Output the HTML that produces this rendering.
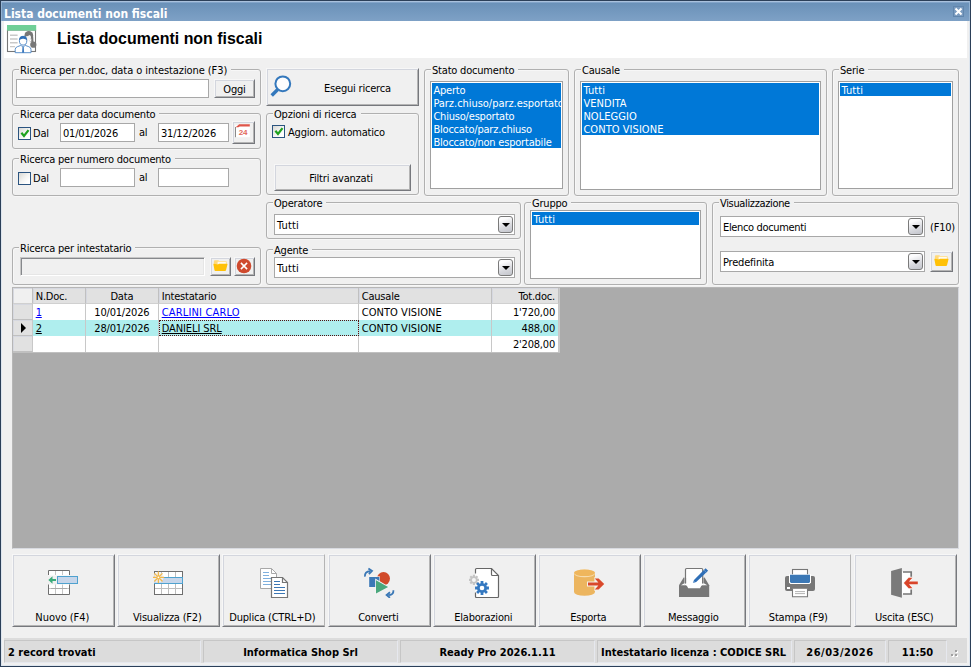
<!DOCTYPE html>
<html lang="it">
<head>
<meta charset="utf-8">
<title>Lista documenti non fiscali</title>
<style>
*{box-sizing:border-box;margin:0;padding:0}
html,body{width:971px;height:667px;overflow:hidden;background:#f0f0f0}
body{font-family:"DejaVu Sans Condensed","Liberation Sans",sans-serif;font-size:11px;color:#000;letter-spacing:-0.2px;position:relative;line-height:13px}
svg{display:block}
.gb,.inp,.btn,.lb,.sp,.cb,.cmb,#frame,#titlebar,#hdr,#grid,#sb{position:absolute}
#frame{left:0;top:0;width:971px;height:667px;border:1px solid #2b3f58;pointer-events:none}
#frame:after{content:"";position:absolute;left:0;top:0;right:0;bottom:0;border:1px solid #dde5ee;border-top-color:#a9c1dc}
#titlebar{z-index:5;left:1px;top:1px;width:969px;height:20px;background:linear-gradient(#82a4c9 0,#82a4c9 1px,#6a91b8 1px,#7ea1c6 100%);border-top:1px solid #a9c1dc;border-left:1px solid #93b2d2;border-right:1px solid #93b2d2}
#titlebar span{position:absolute;left:2px;top:5px;font-weight:bold;font-size:12px;color:#fff;letter-spacing:0;line-height:14px;white-space:nowrap}
#close{position:absolute;left:950.5px;top:4px;width:11px;height:11px;border:1px solid #6186ad;background:#7b9cc0}
#hdr{left:4px;top:21px;width:963px;height:37px;background:#fff}
#hdr h1{position:absolute;left:53px;top:8.5px;font-family:"Liberation Sans",sans-serif;font-size:15.95px;font-weight:bold;letter-spacing:0;line-height:18px;white-space:nowrap}
.gb{border:1px solid #b0b0b0;border-radius:3px;box-shadow:1px 1px 0 #f7f7f7,inset 1px 1px 0 #f7f7f7}
.gb>.lg{position:absolute;left:6px;top:-6px;background:#f0f0f0;padding:0 4px 0 1px;white-space:nowrap;line-height:13px}
.sp{white-space:nowrap;line-height:13px}
.inp{background:#fff;border:1px solid #a8a8a8;padding:3px 0 0 2px;white-space:nowrap;overflow:hidden}
.inp.dis{background:#f0f0f0;border-color:#c6c6c6 #fff #fff #c6c6c6;box-shadow:inset 1px 1px 0 #86888c,inset -1px -1px 0 #e6e6e6}
.btn{background:#f0f0f0;border:1px solid;border-color:#f7f7f7 #76787d #76787d #f7f7f7;box-shadow:inset 1px 1px 0 #d3d6de,inset -1px -1px 0 #b4b4b4;text-align:center;white-space:nowrap;overflow:hidden}
.btn.clip{border-right-color:#b4b4b4;box-shadow:inset 1px 1px 0 #d3d6de,inset 0 -1px 0 #b4b4b4}
.btn.big .ic{position:absolute;left:35px;top:11px;width:32px;height:32px}
.btn.big .bl{position:absolute;left:-2.4px;right:0;top:56px;text-align:center}
.lb{background:#fff;border:1px solid #a0a0a0;padding:1px;overflow:hidden;white-space:nowrap}
.lb{position:absolute}
.lb p{position:absolute;left:1px;right:1px;top:1px;background:#0078d7}
.lb div{position:relative;height:13px;line-height:13px;padding-left:1.4px;top:1px}
.lb div.sel{color:#fff}
b.up{font-weight:normal;letter-spacing:0.05px}
b.tt{font-weight:normal;letter-spacing:0.12px}
.cb{width:13px;height:13px;border:1px solid #2b5480;background:linear-gradient(135deg,#d8d8d4,#f4f4f2 50%,#fff 80%)}
.cb svg{position:absolute;left:0;top:0}
.cmb{background:#fff;border:1px solid #a8a8a8;padding:4px 0 0 2px;white-space:nowrap}
.cmb i{position:absolute;right:1px;top:1px;width:15px;height:17px;border:1px solid #7a7a7a;border-radius:3px;background:linear-gradient(160deg,#fcfcfd 20%,#d9dadf 60%,#c2c4cb)}
.cmb i:after{content:"";position:absolute;left:2.5px;top:5.6px;border:4px solid transparent;border-top:4.5px solid #000;border-bottom:0}
#grid{left:12px;top:287px;width:947px;height:262px;background:#ababab;border:1px solid;border-color:#b6b6b6 #d8dae0 #d8dae0 #b6b6b6}
#grid table{border-collapse:separate;table-layout:fixed;position:absolute;left:0;top:0;border-right:1px solid #cacaca;border-bottom:1px solid #c0c0c0}
#grid th,#grid td{height:16px;line-height:13px;font-weight:normal;white-space:nowrap;overflow:hidden;border-right:1px solid #c8c8c8;padding:2px 3px 1px 2.7px;background:#fff;text-align:left}
#grid th{background:#e1e1e1;border-right-color:#c0c0c0;border-bottom:1px solid #d0d0d0;padding-bottom:0;box-shadow:inset 1px 1px 0 #d6d8e0}
#grid th:first-child{background:#f0f0f0}
#grid td.ind{background:#e1e1e1;border-right-color:#c8c8c8;border-bottom:1px solid #c0c0c0;padding-bottom:0;box-shadow:inset 1px 1px 0 #d6d8e0;position:relative}
#grid .c{text-align:center}
#grid .r{text-align:right}
#grid tr.selr td{background:#afeeee}
#grid tr.selr td.ind{background:#e1e1e1}
#grid td.foc{outline:1px dotted #501111;outline-offset:-1px}
.lk{color:#0000ff}
.lk2{color:#000}
.arr{position:absolute;left:8px;top:3px;border:5px solid transparent;border-left:5px solid #000;border-right:0}
#sb{left:4px;top:638px;width:963px;height:25px;background:#dcdcdc}
#sb .pn{position:absolute;top:2px;height:23px;border:1px solid;border-color:#c6c6c6 #e6e8ee #e6e8ee #c6c6c6;font-weight:bold;letter-spacing:0;line-height:13px;padding:5px 3px 0 3px;white-space:nowrap;overflow:hidden}
#sb .pn.c{text-align:center}
#sb .grip{position:absolute;left:947px;top:12px}
</style>
</head>
<body>
<div id="titlebar"><span>Lista documenti non fiscali</span><svg id="close" viewBox="0 0 9 9"><path d="M1.5 1.5 L7.5 7.5 M7.5 1.5 L1.5 7.5" stroke="#fff" stroke-width="2"/></svg></div>
<div id="hdr"><h1>Lista documenti non fiscali</h1></div>
<svg width="32" height="32" viewBox="6 24 32 32" style="position:absolute;left:6px;top:24px"><rect x="7.5" y="30" width="28" height="21.5" fill="#fff" stroke="#777" stroke-width="1.1"/><rect x="7" y="25" width="29.2" height="5.6" fill="#6fcf97"/><path d="M10 35.2 H17.6 M10 39 H17.6 M10 42.8 H17.6 M10 46.6 H15" stroke="#c9c9c9" stroke-width="1.4"/><ellipse cx="28.8" cy="35.3" rx="4.3" ry="4.2" fill="#777"/><path d="M31.6 33 Q33.6 34.6 33.3 38 L33.5 42.4 L31.2 42.6 L31.4 37 Z" fill="#777"/><circle cx="33.3" cy="44.7" r="3.1" fill="#777"/><ellipse cx="28.3" cy="37.6" rx="2.7" ry="2.8" fill="#f2f2f2"/><path d="M24.9 36.4 Q27.6 36.6 30.6 34.4 L31.8 37 L31.6 33.6 L26 33 Z" fill="#777"/><path d="M29.6 40.6 L31 42.4" stroke="#aaa" stroke-width="0.7"/><path d="M15.2 52.7 V49.6 Q15.2 47.4 17.4 46.7 L20.6 45.5 Q21.6 45 21.4 44 L24.8 44 Q24.6 45 25.6 45.5 L28.8 46.7 Q31 47.4 31 49.6 V52.7 Z" fill="#fff" stroke="#4a85c5" stroke-width="0.9"/><ellipse cx="23.1" cy="40.7" rx="3.7" ry="4.4" fill="#fff" stroke="#4a85c5" stroke-width="0.9"/><path d="M19.3 40.2 Q19 35.9 23.1 35.9 Q27.2 35.9 26.9 40.2 Q25.6 38.6 23.1 38.7 Q20.6 38.6 19.3 40.2 Z" fill="#2f6fb7"/><path d="M22.5 46.4 H23.7 L24.1 52.7 H22.1 Z" fill="#3b78bd"/><path d="M21 45.6 L23.1 47 L25.2 45.6" fill="none" stroke="#4a85c5" stroke-width="0.7"/></svg>
<div class="gb" style="left:12px;top:69px;width:249px;height:37px"><span class="lg"><b style="font-weight:normal;letter-spacing:-0.08px">Ricerca per n.doc, data o intestazione (F3)</b></span></div>
<div class="inp " style="left:16px;top:79px;width:193px;height:19px"></div>
<div class="btn " style="left:214px;top:79px;width:41px;height:19px;"><span style="position:relative;top:3px">Oggi</span></div>
<div class="gb" style="left:12px;top:113px;width:249px;height:36px"><span class="lg">Ricerca per data documento</span></div>
<div class="cb on" style="left:18px;top:127px"><svg width="11" height="11" viewBox="0 0 11 11"><path d="M2.4 4.8 L5 8 L9.5 2.1" fill="none" stroke="#1fa21f" stroke-width="2.2"/></svg></div>
<span class="sp" style="left:33px;top:127px;">Dal</span>
<div class="inp " style="left:60px;top:123px;width:75px;height:19px">01/01/2026</div>
<span class="sp" style="left:139px;top:126px;">al</span>
<div class="inp " style="left:158px;top:123px;width:71px;height:19px">31/12/2026</div>
<div class="btn " style="left:232px;top:121px;width:23px;height:23px;"><svg width="20" height="20" viewBox="234 123 20 20" style="position:absolute;left:1px;top:1px"><rect x="235.4" y="125" width="14.4" height="12.2" fill="#fff"/><path d="M235.5 127 V137.2" stroke="#8a8a8a" stroke-width="1"/><path d="M235.6 127.2 L239.2 124.2 H249.8 V126.4 H239.8 L238.4 127.2 Z" fill="#e0564a"/><text x="243.1" y="135" font-family="Liberation Sans, sans-serif" font-weight="bold" font-size="8" fill="#e2675c" text-anchor="middle" letter-spacing="0">24</text></svg></div>
<div class="gb" style="left:12px;top:158px;width:249px;height:38px"><span class="lg">Ricerca per numero documento</span></div>
<div class="cb" style="left:18px;top:172px"></div>
<span class="sp" style="left:33px;top:172px;">Dal</span>
<div class="inp " style="left:60px;top:168px;width:75px;height:19px"></div>
<span class="sp" style="left:139px;top:171px;">al</span>
<div class="inp " style="left:158px;top:168px;width:71px;height:19px"></div>
<div class="gb" style="left:12px;top:247px;width:249px;height:38px"><span class="lg">Ricerca per intestatario</span></div>
<div class="inp dis" style="left:20px;top:257px;width:185px;height:19px"></div>
<div class="btn " style="left:210px;top:257px;width:21px;height:19px;"><svg width="16" height="13" viewBox="0 0 16 13" style="position:absolute;left:2px;top:2px"><path d="M0.9 1.3 Q0.9 0.2 2 0.2 H5.2 L6.2 1 H12.6 Q13.6 1 13.6 2 V5.5 H0.9 Z" fill="#ffd97a"/><path d="M4.6 1.7 H12.9 V4.6 H4.6 Z" fill="#fffaf0"/><path d="M0.7 3.7 Q0.3 3.7 0.4 4.2 L1.5 10.3 Q1.7 11 2.4 11 H12 Q12.8 11 13 10.3 L14.5 4.2 Q14.6 3.7 14.1 3.7 H6 L5 4.5 Z" fill="#ffc107"/></svg></div>
<div class="btn " style="left:234px;top:257px;width:21px;height:19px;"><svg width="16" height="16" viewBox="0 0 16 16" style="position:absolute;left:1px;top:0px"><circle cx="8" cy="8" r="7.3" fill="#cf4a2e"/><path d="M4.9 4.9 L11.1 11.1 M11.1 4.9 L4.9 11.1" stroke="#fff" stroke-width="1.5"/></svg></div>
<div class="btn " style="left:266px;top:68px;width:153px;height:38px;"><svg width="32" height="32" viewBox="268 72 32 32" style="position:absolute;left:1px;top:3px"><circle cx="282.8" cy="83.8" r="7.4" fill="#fdfdfd" stroke="#3478bc" stroke-width="2"/><path d="M277.7 89.5 L271.7 95.4" stroke="#3478bc" stroke-width="3.5" stroke-linecap="butt"/></svg><span style="position:absolute;left:57px;top:13px">Esegui ricerca</span></div>
<div class="gb" style="left:266px;top:113px;width:153px;height:82px"><span class="lg">Opzioni di ricerca</span></div>
<div class="cb on" style="left:272px;top:125px"><svg width="11" height="11" viewBox="0 0 11 11"><path d="M2.4 4.8 L5 8 L9.5 2.1" fill="none" stroke="#1fa21f" stroke-width="2.2"/></svg></div>
<span class="sp" style="left:288px;top:126px;">Aggiorn. automatico</span>
<div class="btn " style="left:274px;top:164px;width:137px;height:27px;"><span style="position:relative;top:7px;left:-1.5px">Filtri avanzati</span></div>
<div class="gb" style="left:424px;top:69px;width:145px;height:127px"><span class="lg">Stato documento</span></div>
<div class="lb" style="left:430px;top:81px;width:133px;height:108px"><p style="height:65px"></p><div class="sel">Aperto</div><div class="sel"><b style="font-weight:normal;letter-spacing:-0.04px">Parz.chiuso/parz.esportato</b></div><div class="sel">Chiuso/esportato</div><div class="sel">Bloccato/parz.chiuso</div><div class="sel">Bloccato/non esportabile</div></div>
<div class="gb" style="left:574px;top:69px;width:253px;height:127px"><span class="lg">Causale</span></div>
<div class="lb" style="left:580px;top:81px;width:241px;height:109px"><p style="height:52px"></p><div class="sel"><b class="tt">Tutti</b></div><div class="sel"><b class="up">VENDITA</b></div><div class="sel"><b class="up">NOLEGGIO</b></div><div class="sel"><b class="up">CONTO VISIONE</b></div></div>
<div class="gb" style="left:832px;top:69px;width:127px;height:127px"><span class="lg">Serie</span></div>
<div class="lb" style="left:838px;top:81px;width:115px;height:108px"><p style="height:13px"></p><div class="sel"><b class="tt">Tutti</b></div></div>
<div class="gb" style="left:266px;top:202px;width:255px;height:37px"><span class="lg">Operatore</span></div>
<div class="cmb" style="left:274px;top:214px;width:241px;height:21px"><b class="tt">Tutti</b><i></i></div>
<div class="gb" style="left:266px;top:249px;width:255px;height:36px"><span class="lg">Agente</span></div>
<div class="cmb" style="left:274px;top:257px;width:241px;height:21px"><b class="tt">Tutti</b><i></i></div>
<div class="gb" style="left:524px;top:202px;width:183px;height:83px"><span class="lg">Gruppo</span></div>
<div class="lb" style="left:530px;top:210px;width:171px;height:69px"><p style="height:13px"></p><div class="sel"><b class="tt">Tutti</b></div></div>
<div class="gb" style="left:712px;top:202px;width:247px;height:83px"><span class="lg"><b style="font-weight:normal;letter-spacing:-0.35px">Visualizzazione</b></span></div>
<div class="cmb" style="left:720px;top:216px;width:205px;height:21px"><b style="font-weight:normal;letter-spacing:-0.35px">Elenco documenti</b><i></i></div>
<span class="sp" style="left:930px;top:221px;">(F10)</span>
<div class="cmb" style="left:720px;top:251px;width:205px;height:21px">Predefinita<i></i></div>
<div class="btn " style="left:930px;top:251px;width:23px;height:21px;"><svg width="16" height="13" viewBox="0 0 16 13" style="position:absolute;left:2.5px;top:3px"><path d="M0.9 1.3 Q0.9 0.2 2 0.2 H5.2 L6.2 1 H12.6 Q13.6 1 13.6 2 V5.5 H0.9 Z" fill="#ffd97a"/><path d="M4.6 1.7 H12.9 V4.6 H4.6 Z" fill="#fffaf0"/><path d="M0.7 3.7 Q0.3 3.7 0.4 4.2 L1.5 10.3 Q1.7 11 2.4 11 H12 Q12.8 11 13 10.3 L14.5 4.2 Q14.6 3.7 14.1 3.7 H6 L5 4.5 Z" fill="#ffc107"/></svg></div>
<div id="grid">
<table cellspacing="0" cellpadding="0">
<tr class="h"><th class="l" style="width:20px"></th><th class="l" style="width:53px">N.Doc.</th><th class="c" style="width:73px">Data</th><th class="l" style="width:200px">Intestatario</th><th class="l" style="width:133px">Causale</th><th class="r" style="width:67px">Tot.doc.</th></tr>
<tr><td class="l ind"></td><td class="l"><u class="lk">1</u></td><td class="c">10/01/2026</td><td class="l"><u class="lk" style="letter-spacing:0.16px">CARLINI CARLO</u></td><td class="l"><b class="up">CONTO VISIONE</b></td><td class="r">1'720,00</td></tr>
<tr class="selr"><td class="l ind"><i class="arr"></i></td><td class="l"><u class="lk2">2</u></td><td class="c">28/01/2026</td><td class="l foc"><u class="lk2" style="letter-spacing:-0.09px">DANIELI SRL</u></td><td class="l"><b class="up">CONTO VISIONE</b></td><td class="r">488,00</td></tr>
<tr><td class="l ind"></td><td class="l"></td><td class="c"></td><td class="l"></td><td class="l"></td><td class="r">2'208,00</td></tr>
</table></div>
<div class="btn big" style="left:12px;top:554px;width:103px;height:73px;"><span class="ic" style="left:35px"><svg width="32" height="32" viewBox="48 566 32 32" ><rect x="48.5" y="570.5" width="21" height="5" fill="#fff"/><rect x="48.5" y="584.5" width="21" height="10" fill="#fff"/><path d="M55.5 571 V575 M62.5 571 V575 M55.5 584.5 V594 M62.5 584.5 V594 M49 588.5 H69" stroke="#c6c6c6" stroke-width="1"/><path d="M51 588.5 H67" stroke="#aaa" stroke-width="1"/><path d="M48.5 575 V570.5 H69.5 V575 M48.5 584.5 V594.5 H69.5 V584.5" fill="none" stroke="#6e6e6e" stroke-width="1"/><rect x="57.5" y="576.5" width="20" height="7" fill="#c7d6ea" stroke="#4fa2cf" stroke-width="1"/><path d="M48.3 580 L52.5 576.2 L52.5 579 H56 V581 H52.5 L52.5 583.8 Z" fill="#3bab7b"/></svg></span><span class="bl"><b style="font-weight:normal;letter-spacing:-0.06px">Nuovo (F4)</b></span></div>
<div class="btn big" style="left:117px;top:554px;width:103px;height:73px;"><span class="ic" style="left:35px"><svg width="32" height="32" viewBox="153 566 32 32" ><rect x="154.5" y="571.5" width="28" height="23" fill="#fff" stroke="#6e6e6e" stroke-width="1"/><path d="M161.5 572 V594 M168.5 572 V594 M175.5 572 V594 M155 588.5 H182" stroke="#bdbdbd" stroke-width="1"/><rect x="154" y="577" width="29" height="7" fill="#4fa2cf"/><rect x="154" y="578" width="28" height="5" fill="#c7d6ea"/><circle cx="158.4" cy="577.3" r="5.2" fill="#f0f0f0" opacity="0.85"/><g stroke="#f2b84b" stroke-width="1.3" stroke-linecap="round"><path d="M158.4 572 V582.6 M153.1 577.3 H163.7 M154.7 573.6 L162.1 581 M162.1 573.6 L154.7 581"/></g><circle cx="158.4" cy="577.3" r="0.9" fill="#fff"/></svg></span><span class="bl">Visualizza (F2)</span></div>
<div class="btn big clip" style="left:222px;top:554px;width:103px;height:73px;"><span class="ic" style="left:35px"><svg width="32" height="32" viewBox="258 566 32 32" ><path d="M260.5 568.5 H271.5 L276.5 573.5 V588.5 H260.5 Z" fill="#fff" stroke="#a8a8a8" stroke-width="1"/><path d="M271.5 568.5 V573.5 H276.5" fill="none" stroke="#a8a8a8" stroke-width="1"/><path d="M263 572.5 H269 M263 575.5 H269 M263 578.5 H272 M263 581.5 H272 M263 584.5 H272" stroke="#7fb0de" stroke-width="1"/><path d="M271.5 577.5 H282.5 L287.5 582.5 V597.5 H271.5 Z" fill="#fff" stroke="#767676" stroke-width="1.2"/><path d="M282.5 577.5 V582.5 H287.5" fill="none" stroke="#767676" stroke-width="1.2"/><path d="M274 581.5 H280 M274 584.5 H280 M274 587.5 H285 M274 590.5 H285 M274 593.5 H285" stroke="#3b77b5" stroke-width="1.1"/></svg></span><span class="bl">Duplica (CTRL+D)</span></div>
<div class="btn big" style="left:328px;top:554px;width:103px;height:73px;"><span class="ic" style="left:34px"><svg width="32" height="32" viewBox="363 566 32 32" ><circle cx="383.5" cy="578.6" r="7.1" fill="#f0f0f0"/><circle cx="383.5" cy="578.6" r="6.5" fill="#d14a2a"/><rect x="368.6" y="576.4" width="11.3" height="11.2" fill="#f4f4f4"/><rect x="369.2" y="577" width="10.2" height="10" fill="#3b78b6"/><path d="M375.2 578.6 L389.6 587 L375.2 594.8 Z" fill="#f4f4f4"/><path d="M376 580.2 L388.1 587 L376 593.4 Z" fill="#4aa77c"/><path d="M364.9 576.6 Q364.6 571.6 370.2 571.2" fill="none" stroke="#3b78b6" stroke-width="1.8"/><path d="M368.4 568.4 L372 570.9 L368.9 574" fill="none" stroke="#3b78b6" stroke-width="1.8"/><path d="M393.4 590.2 Q393.8 595 388.2 595.2" fill="none" stroke="#3b78b6" stroke-width="1.8"/><path d="M390 592.2 L386.6 595.1 L390 597.8" fill="none" stroke="#3b78b6" stroke-width="1.8"/></svg></span><span class="bl">Converti</span></div>
<div class="btn big" style="left:433px;top:554px;width:103px;height:73px;"><span class="ic" style="left:35px"><svg width="32" height="32" viewBox="469 566 32 32" ><path d="M475.5 568.5 H491.5 L498.5 575.5 V597.5 H475.5 Z" fill="#fff"/><path d="M475.5 573.5 V569.5 Q475.5 568.5 476.5 568.5 H491.5 L498.5 575.5 V596.5 Q498.5 597.5 497.5 597.5 H476.5 Q475.5 597.5 475.5 596.5 V592.5" fill="none" stroke="#666" stroke-width="1.2"/><path d="M491.5 568.5 V574.5 Q491.5 575.5 492.5 575.5 H498.5" fill="none" stroke="#666" stroke-width="1.2"/><path d="M472.85 576.25 L472.87 574.80 L474.93 574.80 L474.95 576.25 L475.74 576.58 L476.77 575.57 L478.23 577.03 L477.22 578.06 L477.55 578.85 L479.00 578.87 L479.00 580.93 L477.55 580.95 L477.22 581.74 L478.23 582.77 L476.77 584.23 L475.74 583.22 L474.95 583.55 L474.93 585.00 L472.87 585.00 L472.85 583.55 L472.06 583.22 L471.03 584.23 L469.57 582.77 L470.58 581.74 L470.25 580.95 L468.80 580.93 L468.80 578.87 L470.25 578.85 L470.58 578.06 L469.57 577.03 L471.03 575.57 L472.06 576.58 Z" fill="#c4c4c4"/><circle cx="473.9" cy="579.9" r="2.0" fill="#f6f6f6"/><path d="M480.62 583.19 L480.59 581.04 L483.41 581.04 L483.38 583.19 L484.42 583.63 L485.92 582.08 L487.92 584.08 L486.37 585.58 L486.81 586.62 L488.96 586.59 L488.96 589.41 L486.81 589.38 L486.37 590.42 L487.92 591.92 L485.92 593.92 L484.42 592.37 L483.38 592.81 L483.41 594.96 L480.59 594.96 L480.62 592.81 L479.58 592.37 L478.08 593.92 L476.08 591.92 L477.63 590.42 L477.19 589.38 L475.04 589.41 L475.04 586.59 L477.19 586.62 L477.63 585.58 L476.08 584.08 L478.08 582.08 L479.58 583.63 Z" fill="#3478c0"/><circle cx="482" cy="588" r="2.3" fill="#fff"/></svg></span><span class="bl">Elaborazioni</span></div>
<div class="btn big" style="left:538px;top:554px;width:103px;height:73px;"><span class="ic" style="left:35px"><svg width="32" height="32" viewBox="574 566 32 32" ><path d="M574 573 V592 A10.5 3.8 0 0 0 595 592 V573 Z" fill="#ecb55f"/><ellipse cx="584.5" cy="573.4" rx="10.5" ry="3.9" fill="#f6dcae"/><ellipse cx="584.5" cy="572.8" rx="10.5" ry="3.3" fill="#efb65c"/><path d="M587 581.6 H594.4 V577 H599 L605.6 584 L599 591 H594.4 V586.4 H587 Z" fill="#f3efe9"/><path d="M588 582.6 H598.4 L594.8 578.4 H598.6 L604.2 584 L598.6 589.6 H594.8 L598.4 585.4 H588 Z" fill="#d9482b"/></svg></span><span class="bl">Esporta</span></div>
<div class="btn big" style="left:643px;top:554px;width:103px;height:73px;"><span class="ic" style="left:35px"><svg width="32" height="32" viewBox="679 566 32 32" ><path d="M679 597 V585.2 L683.7 577.6 H704.6 L709.2 585.2 V597 Z" fill="#777"/><path d="M684.4 577 H703.8 V585.2 H684.4 Z" fill="#f0f0f0"/><path d="M680.9 585.2 L684.4 583.2 V585.2 Z M707.3 585.2 L703.8 583.2 V585.2 Z" fill="#fff"/><path d="M685.5 586 V569.5 Q685.5 568.5 686.5 568.5 H701.7 Q702.7 568.5 702.7 569.5 V586 Z" fill="#fff" stroke="#777" stroke-width="1.2"/><path d="M684.4 585.2 H686.6 L688.2 588.2 H700 L701.6 585.2 H703.8 V583.2 H684.4 Z" fill="#fff"/><path d="M685.5 583.4 V578 M702.7 583.4 V578" stroke="#777" stroke-width="1.2"/><path d="M692.9 583 L694 579.9 L705.6 568.3 L708.1 570.8 L696.2 582 Z" fill="#2f6fb7"/><path d="M692.9 583 L693.7 580.8 L695.1 582.2 Z" fill="#8db4de"/><path d="M703.9 570 L706.4 572.5" stroke="#7fa9d8" stroke-width="0.6"/></svg></span><span class="bl">Messaggio</span></div>
<div class="btn big clip" style="left:748px;top:554px;width:103px;height:73px;"><span class="ic" style="left:35px"><svg width="32" height="32" viewBox="784 566 32 32" ><rect x="785" y="576" width="30" height="15" rx="2" fill="#777"/><rect x="792.5" y="569.5" width="15" height="7" fill="#fff" stroke="#777" stroke-width="1.1"/><path d="M789 574.2 H811 V582.4 L809.6 584 H790.4 L789 582.4 Z" fill="#fff"/><path d="M790 574.8 H810 V582 L809 583 H791 L790 582 Z" fill="#3b78b6"/><path d="M792.5 588.8 V596.7 H807.5 V588.8" fill="#fff" stroke="#777" stroke-width="1.1"/><path d="M795 591.6 H805 M795 593.6 H805" stroke="#aaa" stroke-width="0.9"/><rect x="787" y="587" width="3" height="2" fill="#fff"/></svg></span><span class="bl">Stampa (F9)</span></div>
<div class="btn big" style="left:854px;top:554px;width:103px;height:73px;"><span class="ic" style="left:35px"><svg width="32" height="32" viewBox="890 566 32 32" ><rect x="902" y="571.8" width="9.2" height="22.4" fill="#fff"/><path d="M903 572 H911.2 V576.8 M911.2 589.4 V594 H903" fill="none" stroke="#777" stroke-width="1.7"/><path d="M891.1 571.1 L901.9 568 V597.8 L891.1 594.8 Z" fill="#7a7a7a"/><path d="M903 583 L908.4 576.9 H913.6 L909.6 581.2 H918.4 V584.8 H909.6 L913.6 589.1 H908.4 Z" fill="#f6f2ee"/><path d="M903.9 583 L908.7 577.7 H912.4 L908.9 581.6 H917.8 V584.3 H908.9 L912.4 588.3 H908.7 Z" fill="#d9442a"/></svg></span><span class="bl">Uscita (ESC)</span></div>
<div id="sb">
<div class="pn l" style="left:0px;width:197px">2 record trovati</div>
<div class="pn c" style="left:199px;width:195px">Informatica Shop Srl</div>
<div class="pn c" style="left:396px;width:195px">Ready Pro 2026.1.11</div>
<div class="pn l" style="left:593px;width:195px">Intestatario licenza : CODICE SRL</div>
<div class="pn c" style="left:790px;width:92px"><b style="letter-spacing:0.5px">26/03/2026</b></div>
<div class="pn c" style="left:884px;width:59px">11:50</div>
<svg class="grip" width="8" height="8" viewBox="0 0 8 8"><g fill="#fff"><rect x="5" y="1" width="2" height="2"/><rect x="1" y="5" width="2" height="2"/><rect x="5" y="5" width="2" height="2"/></g><g fill="#a0a0a0"><rect x="4" y="0" width="2" height="2"/><rect x="0" y="4" width="2" height="2"/><rect x="4" y="4" width="2" height="2"/></g></svg>
</div>
<div id="frame"></div>
</body>
</html>
